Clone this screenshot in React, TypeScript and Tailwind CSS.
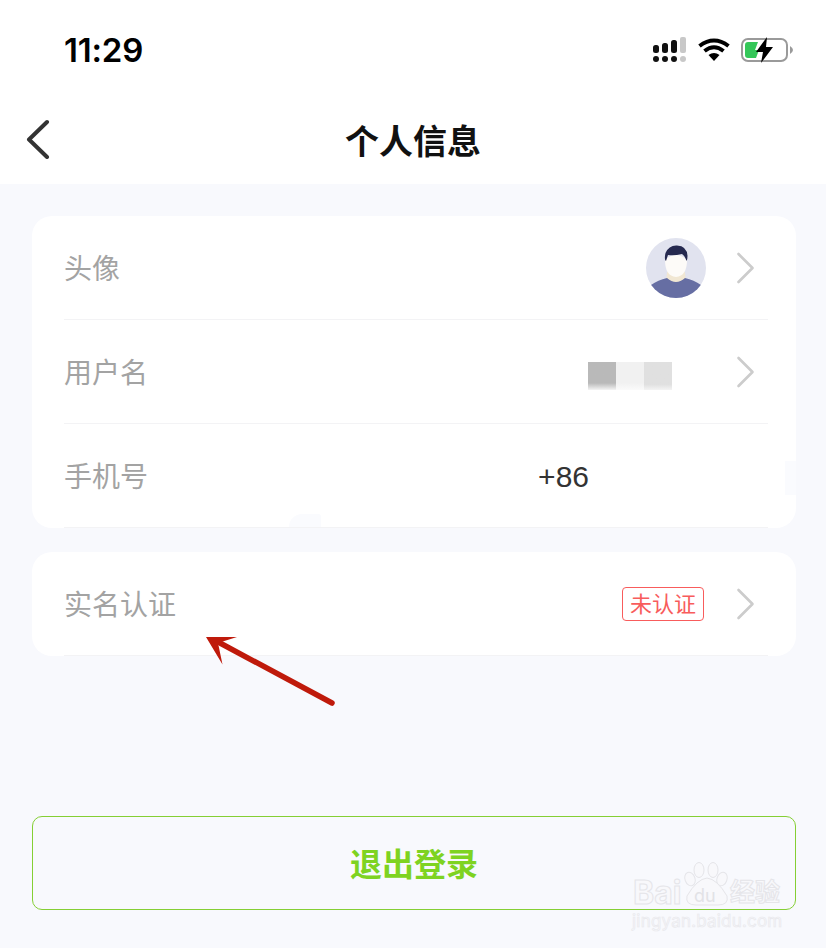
import React from "react";

const cjk = "font-['Inter','Noto_Sans_CJK_SC',sans-serif]";

function Chevron() {
  return (
    <svg width="20" height="32" viewBox="0 0 20 32" fill="none" className="shrink-0">
      <path d="M2.5 2 L16.5 16 L2.5 30" stroke="#cccccc" strokeWidth="2.6" strokeLinecap="round" strokeLinejoin="round" />
    </svg>
  );
}

function Avatar() {
  return (
    <svg width="60" height="60" viewBox="0 0 60 60" className="shrink-0">
      <defs>
        <clipPath id="av"><circle cx="30" cy="30" r="30" /></clipPath>
      </defs>
      <g clipPath="url(#av)">
        <rect width="60" height="60" fill="#e1e3ef" />
        <path d="M21 34 L39 34 L40 46 L20 46 Z" fill="#f1e7d3" />
        <path d="M5 60 L5 47 Q12 42 21 40 Q30 48 39 40 Q48 42 55 47 L55 60 Z" fill="#666ea3" />
        <path d="M19 22 Q19 38 30 39 Q41 38 41 22 Q30 12 19 22 Z" fill="#fdfbf8" />
        <path d="M20 23 Q18 22 19.500 15 Q23 7 31 7.500 Q41 8 41.500 18 Q41.500 22 40.500 23 Q39 18 36 16 Q28 18 22 17 Q21 20 20 23 Z" fill="#25294f" />
      </g>
    </svg>
  );
}

function Row({ label, children }: { label: string; children?: React.ReactNode }) {
  return (
    <div className="h-[104px] ml-8 mr-7 border-b border-[#f3f3f5] flex items-center justify-between">
      <span className="pt-[2px] text-[28px] leading-none text-[#a3a3a3]">{label}</span>
      {children}
    </div>
  );
}

function Watermark() {
  return (
    <div className="absolute left-[632px] top-[858px] w-[152px] h-[74px] pointer-events-none">
      <svg width="152" height="50" viewBox="0 0 152 50" className="absolute left-0 top-0" fill="#f8f8fb" stroke="#e5e5e9" strokeWidth="1">
        <ellipse cx="67" cy="12" rx="5" ry="7.500" />
        <ellipse cx="81" cy="12" rx="5" ry="7.500" />
        <ellipse cx="58" cy="21" rx="5" ry="7" transform="rotate(-20 58 21)" />
        <ellipse cx="90" cy="21" rx="5" ry="7" transform="rotate(20 90 21)" />
        <path d="M75 20 Q85 21 95 38 Q97 47 86 47 L64 47 Q53 47 55 38 Q65 21 75 20 Z" />
      </svg>
      <span className="absolute left-[1px] top-[19px] text-[32px] leading-none font-bold text-[#f8f8fb] [-webkit-text-stroke:1px_#e5e5e9]">Bai</span>
      <span className="absolute left-[62px] top-[29px] text-[18px] leading-none text-[#e2e2e6]">du</span>
      <span className="absolute left-[98px] top-[22px] text-[25px] leading-none font-bold text-[#f8f8fb] [-webkit-text-stroke:1px_#e5e5e9]">经验</span>
      <span className="absolute left-0 top-[55px] text-[17px] leading-none tracking-[0.2px] text-[#f6f6f9] [-webkit-text-stroke:0.6px_#e8e8ec]">jingyan.baidu.com</span>
    </div>
  );
}

export default function App() {
  return (
    <div className={`relative w-[826px] h-[948px] overflow-hidden bg-[#f8f9fd] ${cjk}`}>
      <header className="h-[184px] bg-white flex flex-col">
        <div className="h-[92px] pt-[8px] pl-[64px] pr-[33px] flex items-center justify-between">
          <span className="text-[33px] leading-none font-semibold text-black font-['Inter',sans-serif] tracking-[-0.2px]">11:29</span>
          <div className="flex items-center gap-[11px]">
            <svg width="34" height="26" viewBox="0 0 34 26">
              <rect x="0" y="8" width="6" height="8" rx="2.500" fill="#111" />
              <rect x="9" y="6" width="6" height="10" rx="2.500" fill="#111" />
              <rect x="18" y="3" width="6" height="13" rx="2.500" fill="#111" />
              <rect x="27" y="0" width="6" height="16" rx="2" fill="#c8c8c8" />
              <circle cx="3" cy="22" r="3" fill="#111" />
              <circle cx="12" cy="22" r="3" fill="#111" />
              <circle cx="21" cy="22" r="3" fill="#111" />
              <circle cx="30" cy="22" r="3" fill="#c8c8c8" />
            </svg>
            <svg width="32" height="24" viewBox="0 0 32 24" fill="none">
              <path d="M1.500 8 Q16 -3 30.500 8" stroke="#000" strokeWidth="4" />
              <path d="M6.500 13 Q16 5.500 25.500 13" stroke="#000" strokeWidth="4" />
              <path d="M10.500 17 L16 23 L21.500 17 Q16 13 10.500 17 Z" fill="#000" />
            </svg>
            <svg width="52" height="28" viewBox="0 0 52 28" fill="none">
              <rect x="1" y="3" width="45" height="22" rx="6" stroke="#9a9a9a" strokeWidth="2" />
              <path d="M4 9 Q4 6 7 6 L17 6 L14 14 L18 14 L15 22 L7 22 Q4 22 4 19 Z" fill="#34c759" />
              <path d="M49 10 Q52 12 52 14 Q52 16 49 18 Z" fill="#9a9a9a" />
              <path d="M26 1 L15 16 L22 16 L20 27 L32 11 L25 11 Z" fill="#000" />
            </svg>
          </div>
        </div>
        <div className="relative flex-1 flex items-center justify-center pt-[8px]">
          <svg width="24" height="40" viewBox="0 0 24 40" fill="none" className="absolute left-[26px] top-[27px]">
            <path d="M21 3 L3 20.500 L21 38" stroke="#333333" strokeWidth="4" strokeLinecap="round" strokeLinejoin="round" />
          </svg>
          <h1 className="text-[34px] leading-none font-bold text-[#111]">个人信息</h1>
        </div>
      </header>

      <main className="pl-8 pr-[30px] pt-8">
        <section className="bg-white rounded-[20px] overflow-hidden">
          <Row label="头像">
            <div className="flex items-center gap-[30px] pr-[12px]">
              <Avatar />
              <Chevron />
            </div>
          </Row>
          <Row label="用户名">
            <div className="flex items-center pr-[12px]">
              <div className="flex h-[28px] mr-[64px] mt-[8px]">
                <div className="w-[28px] bg-gradient-to-b from-[#b9b9b9] from-75% to-[#f4f4f4]" />
                <div className="w-[28px] bg-gradient-to-b from-[#f1f1f1] from-75% to-[#fbfbfb]" />
                <div className="w-[28px] bg-gradient-to-b from-[#e0e0e0] from-80% to-[#f4f4f4]" />
              </div>
              <Chevron />
            </div>
          </Row>
          <Row label="手机号">
            <span className="pt-[2px] text-[30px] leading-none text-[#333] mr-[179px] font-['Liberation_Sans',sans-serif]">+86</span>
          </Row>
        </section>

        <section className="mt-6 bg-white rounded-[20px] overflow-hidden">
          <Row label="实名认证">
            <div className="flex items-center gap-[32px] pr-[12px]">
              <span className="h-[34px] w-[82px] border border-[#f85c5c] rounded-[4px] text-[#f85c5c] text-[22px] leading-none flex items-center justify-center">未认证</span>
              <Chevron />
            </div>
          </Row>
        </section>

        <button className="mt-[160px] w-full h-[94px] pt-[3px] bg-transparent border border-[#85cf34] rounded-[10px] text-[#7ed321] text-[32px] font-bold leading-none">
          退出登录
        </button>
      </main>

      {/* retouching marks left on the screenshot */}
      <div className="absolute left-[785px] top-[461px] w-[11px] h-[34px] bg-[#fafbfe]" />
      <div className="absolute left-[289px] top-[514px] w-[32px] h-[13px] rounded-tl-[28px] rounded-tr-[6px] bg-[#fafbfe]" />

      <svg width="140" height="80" viewBox="0 0 140 80" fill="none" className="absolute left-[200px] top-[630px]">
        <path d="M132 73 L20 13" stroke="#bf1a0b" strokeWidth="5.500" strokeLinecap="round" />
        <path d="M6 7 L37 7 L18 13 L22.500 34.500 Z" fill="#bf1a0b" />
      </svg>

      <Watermark />
    </div>
  );
}
